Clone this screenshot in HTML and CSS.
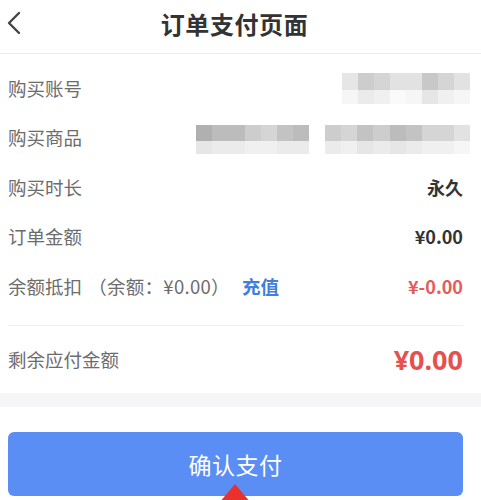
FILE: index.html
```html
<!DOCTYPE html>
<html lang="zh-CN">
<head>
<meta charset="utf-8">
<title>订单支付页面</title>
<link rel="stylesheet" href="styles.css">
</head>
<body>
<div class="page">
  <header class="header">
    <svg class="back" width="16" height="24" viewBox="0 0 16 24"><path d="M13 2 L3 12 L13 22" fill="none" stroke="#444" stroke-width="2.4" stroke-linecap="round" stroke-linejoin="round"/></svg>
    <h1 class="title">订单支付页面</h1>
  </header>
  <section class="card">
    <div class="row">
      <span class="label">购买账号</span>
      <div class="mosaic m-account">
        <i class="c5"></i><i class="c2"></i><i class="c3"></i><i class="c4"></i><i class="c4"></i><i class="c1"></i><i class="c3"></i><i class="c4"></i>
        <i class="c8"></i><i class="c6"></i><i class="c7"></i><i class="c9"></i><i class="c8"></i><i class="c5"></i><i class="c7"></i><i class="c8"></i>
      </div>
    </div>
    <div class="row">
      <span class="label">购买商品</span>
      <div class="mosaics">
        <div class="mosaic m-prod1">
          <i class="d1"></i><i class="d2"></i><i class="d2"></i><i class="c2"></i><i class="c3"></i><i class="d3"></i><i class="d2"></i>
          <i class="c5"></i><i class="c6"></i><i class="c6"></i><i class="c7"></i><i class="c7"></i><i class="c6"></i><i class="c6"></i>
        </div>
        <div class="mosaic m-prod2">
          <i class="c2"></i><i class="c3"></i><i class="d3"></i><i class="c2"></i><i class="d2"></i><i class="d3"></i><i class="c3"></i><i class="c3"></i><i class="c4"></i>
          <i class="c6"></i><i class="c7"></i><i class="c5"></i><i class="c6"></i><i class="c5"></i><i class="c6"></i><i class="c7"></i><i class="c7"></i><i class="c8"></i>
        </div>
      </div>
    </div>
    <div class="row">
      <span class="label">购买时长</span>
      <span class="value">永久</span>
    </div>
    <div class="row">
      <span class="label">订单金额</span>
      <span class="value">¥0.00</span>
    </div>
    <div class="row">
      <span class="label">余额抵扣 <span class="balance">（余额：¥0.00）</span><a class="recharge">充值</a></span>
      <span class="value red">¥-0.00</span>
    </div>
    <div class="divider"></div>
    <div class="row total">
      <span class="label">剩余应付金额</span>
      <span class="total-value">¥0.00</span>
    </div>
  </section>
  <div class="gap"></div>
  <section class="footer">
    <button class="pay">确认支付</button>
    <svg class="arrow" width="40" height="20" viewBox="0 0 40 20"><path d="M20 1 L4 20 L36 20 Z" fill="#e8322b"/></svg>
  </section>
</div>
</body>
</html>
```
FILE: styles.css
```css
* { box-sizing: border-box; margin: 0; padding: 0; }
html, body { width: 481px; height: 500px; overflow: hidden; background: #fff; }
body {
  font-family: "Noto Sans CJK SC", "Noto Sans", sans-serif;
  color: #333;
}
.page { position: relative; height: 500px; }
.header {
  position: relative;
  height: 54px;
  border-bottom: 1px solid #ececec;
  display: flex;
  align-items: center;
  justify-content: center;
}
.back { position: absolute; left: 6px; top: 11px; }
.title {
  font-size: 24px;
  font-weight: 700;
  color: #333;
  margin-left: -12px;
  letter-spacing: 0.6px;
  line-height: 1;
  margin-top: -5px;
}
.card { padding: 9px 18px 0 8px; }
.row {
  height: 49.5px;
  display: flex;
  align-items: center;
  justify-content: space-between;
}
.label {
  font-size: 18.5px;
  color: #6c6c6c;
  white-space: nowrap;
}
.balance { margin-left: 2px; letter-spacing: 0.3px; }
.recharge {
  color: #3f7fde;
  font-weight: 700;
  margin-left: 12px;
}
.value {
  font-size: 18px;
  font-weight: 700;
  color: #333;
}
.value.red { color: #e65a5c; }
.divider {
  height: 1px;
  background: #efefef;
  margin-top: 14px;
}
.row.total { height: 67px; }
.total-value {
  font-size: 27px;
  font-weight: 700;
  color: #e4514f;
  font-family: "Noto Sans", sans-serif;
}
.gap { height: 14px; background: #f5f6f8; }
.footer { position: relative; padding: 25px 18px 0 8px; }
.pay {
  display: block;
  width: 455px;
  height: 64px;
  border: none;
  border-radius: 6px;
  background: #5a8ef5;
  color: #fff;
  font-family: "Noto Sans CJK SC", sans-serif;
  font-size: 23px;
  letter-spacing: 0.5px;
}
.arrow { position: absolute; left: 215px; top: 76px; }

/* mosaic blur */
.mosaics { display: flex; gap: 16px; margin-right: -7px; margin-top: 4px; }
.mosaic { display: grid; }
.mosaic i { display: block; }
.m-account { grid-template-columns: repeat(8, 16px); grid-template-rows: 17px 14px; margin-right: -7px; margin-top: 2px; }
.m-prod1 { grid-template-columns: repeat(7, 16.15px); grid-template-rows: 16px 13px; }
.m-prod2 { grid-template-columns: repeat(9, 16.1px); grid-template-rows: 16px 13px; }
.c1 { background: #c8c8c8; }
.c2 { background: #cdcdcd; }
.c3 { background: #d5d5d5; }
.c4 { background: #e2e2e2; }
.c5 { background: #e6e6e6; }
.c6 { background: #ebebeb; }
.c7 { background: #f0f0f0; }
.c8 { background: #f6f6f6; }
.c9 { background: #fafafa; }
.d1 { background: #b0b0b0; }
.d2 { background: #bcbcbc; }
.d3 { background: #c3c3c3; }
```
